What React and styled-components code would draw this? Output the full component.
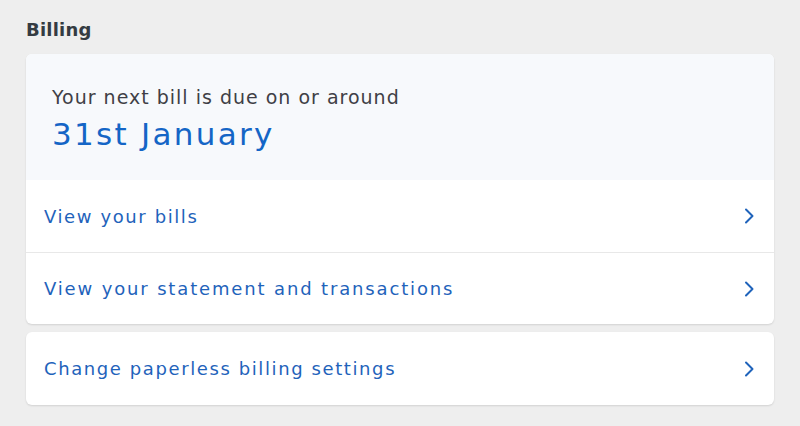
import React from "react";
import styled, { createGlobalStyle } from "styled-components";

const Global = createGlobalStyle`
  html, body { margin: 0; padding: 0; background: #eeeeee; }
  body { font-family: "DejaVu Sans", "Noto Sans", sans-serif; }
  * { box-sizing: border-box; }
`;

const Page = styled.div`
  padding: 16px 26px 20px 26px;
  display: flex;
  flex-direction: column;
  gap: 8px;
`;

const Title = styled.h2`
  margin: 0 0 2px 0;
  font-size: 18px;
  font-weight: 600;
  color: #343b42;
  line-height: 28px;
  letter-spacing: 0.2px;
`;

const Card = styled.div`
  background: #ffffff;
  border-radius: 6px;
  box-shadow: 0 1px 2px rgba(0, 0, 0, 0.12);
  overflow: hidden;
`;

const Header = styled.div`
  background: #f7f9fc;
  padding: 30px 26px 24px 26px;
  height: 126px;
`;

const Lead = styled.div`
  font-size: 19px;
  color: #3f3f46;
  line-height: 26px;
  letter-spacing: 1px;
`;

const Date = styled.div`
  font-size: 31px;
  color: #1465c6;
  line-height: 40px;
  margin-top: 4px;
  letter-spacing: 2.3px;
`;

const Row = styled.a`
  display: flex;
  align-items: center;
  justify-content: space-between;
  height: ${(p) => p.$h || 72}px;
  padding: 0 18px 0 18px;
  color: #1f63bb;
  font-size: 18px;
  letter-spacing: ${(p) => p.$ls || 1.6}px;
  text-decoration: none;
  & + & {
    border-top: 1px solid #e8e8e8;
  }
`;

const Chevron = () => (
  <svg width="14" height="18" viewBox="0 0 14 18" fill="none">
    <path d="M4 2.5 L10.5 9 L4 15.5" stroke="#1f63bb" strokeWidth="2" strokeLinecap="round" strokeLinejoin="round" />
  </svg>
);

export default function App() {
  return (
    <>
      <Global />
      <Page>
        <Title>Billing</Title>
        <Card>
          <Header>
            <Lead>Your next bill is due on or around</Lead>
            <Date>31st January</Date>
          </Header>
          <Row href="#">
            <span>View your bills</span>
            <Chevron />
          </Row>
          <Row href="#" $h={72} $ls={1.85}>
            <span>View your statement and transactions</span>
            <Chevron />
          </Row>
        </Card>
        <Card>
          <Row href="#" $h={73}>
            <span>Change paperless billing settings</span>
            <Chevron />
          </Row>
        </Card>
      </Page>
    </>
  );
}
